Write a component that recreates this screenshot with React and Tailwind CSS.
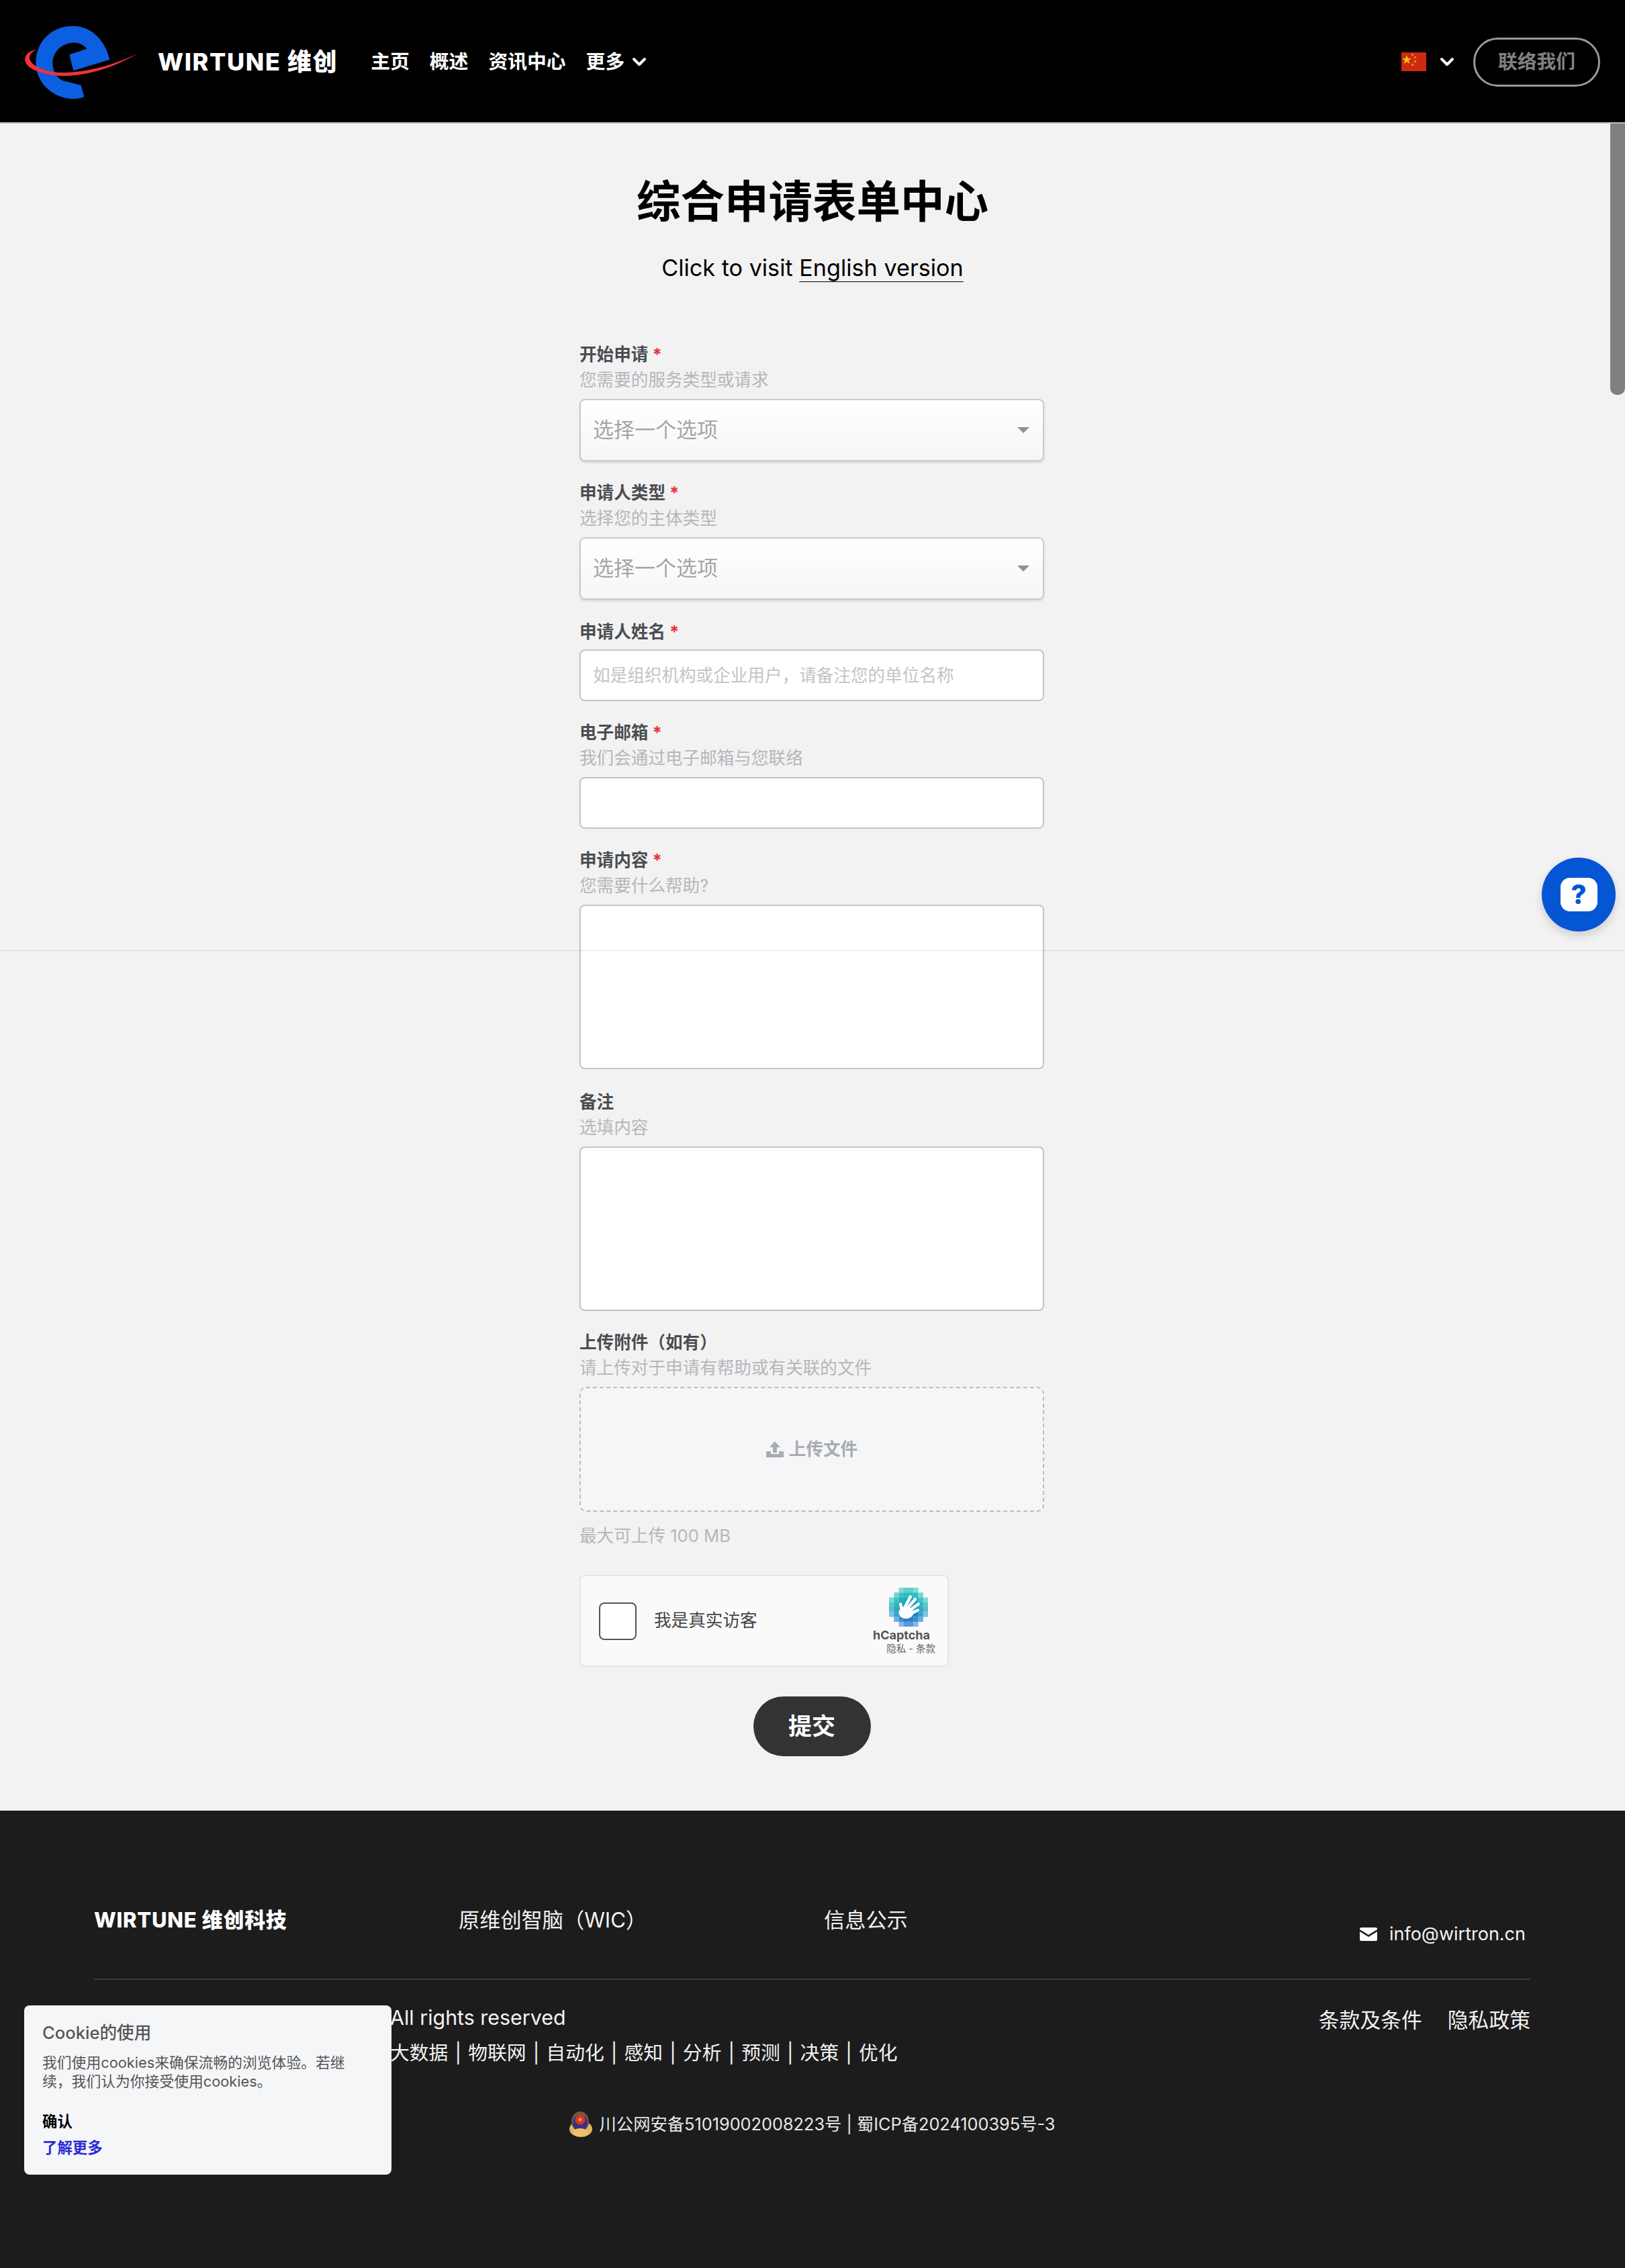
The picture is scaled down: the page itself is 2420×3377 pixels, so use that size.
import React from 'react';
import { ChevronDown } from 'lucide-react';

const CJK = "font-['Inter','Noto_Sans_CJK_SC',sans-serif]";

const Logo = () => (
  <svg viewBox="48 42 513 336" className="w-[171px] h-[112px] shrink-0">
    <path d="M265 50C350 50 410 115 430 200L268 250L250 178L328 152C310 130 285 122 262 125C210 130 175 170 175 215C175 260 205 295 235 298L302 315L316 366C295 376 270 378 250 374C165 365 100 295 100 215C100 120 170 50 265 50Z" fill="#0b5fe0" />
    <path d="M105 155C70 160 48 180 52 205C58 240 120 265 200 272C320 280 450 235 558 172C450 225 320 262 200 258C130 252 78 225 72 195C70 178 85 162 105 155Z" fill="#f0333a" />
  </svg>
);

const Flag = () => (
  <svg viewBox="0 0 37 28" className="w-[37px] h-[28px]">
    <rect width="37" height="28" fill="#cc2a12" />
    <polygon points="8,4 9.8,9 15,9 10.8,12 12.4,17 8,14 3.6,17 5.2,12 1,9 6.2,9" fill="#f6c500" />
    <rect x="15" y="2" width="3" height="3" fill="#e8821a" />
    <rect x="19" y="6" width="3" height="3" fill="#e8821a" />
    <rect x="19" y="12" width="3" height="3" fill="#e8821a" />
    <rect x="15" y="17" width="3" height="3" fill="#e8821a" />
  </svg>
);

const Label = ({ text, required, hint }) => (
  <>
    <div className="h-[38px] leading-[38px] text-[25.6px] font-bold text-[#4a4d52]">
      {text}
      {required && <span className="text-[#e5323f] ml-[6px]">*</span>}
    </div>
    {hint && <div className="h-[38px] leading-[38px] text-[25.6px] text-[#b4b7bc]">{hint}</div>}
  </>
);

const Select = () => (
  <div className="mt-[9px] h-[93px] flex items-center justify-between pl-[18px] pr-[20px] rounded-[8px] border-2 border-[#cbcbcb] bg-gradient-to-b from-white to-[#f6f6f6] shadow-[0_2px_3px_rgba(0,0,0,0.12)]">
    <span className="text-[31px] text-[#a3a5a8]">选择一个选项</span>
    <span className="w-0 h-0 border-x-[9px] border-x-transparent border-t-[9px] border-t-[#909090]"></span>
  </div>
);

const Input = ({ placeholder }) => (
  <div className={`h-[77px] flex items-center px-[18px] pt-[2px] rounded-[8px] border-2 border-[#c4c4c4] bg-white text-[25.6px] text-[#c2c4c8] ${placeholder ? '' : 'mt-[9px]'}`}>
    {placeholder}
  </div>
);

const TextArea = () => (
  <div className="mt-[9px] h-[245px] rounded-[8px] border-2 border-[#c4c4c4] bg-white"></div>
);

const Captcha = () => {
  // hCaptcha mosaic, row by row
  const rows = [
    ['', '', '#7fdad3', '#5fd0ca', '#5fd0ca', '#7fdad3', '', ''],
    ['', '#72d6d0', '#3cc4c2', '#2fbcc0', '#2fbcc0', '#2fbcc0', '#72d6d0', ''],
    ['#7fdad3', '#3cc4c2', '#22afbb', '#1da9b8', '#1da9b8', '#1da9b8', '#3cc4c2', '#7fdad3'],
    ['#5cc8cc', '#2fb6c0', '#1aa0b6', '#1496b4', '#1496b4', '#1496b4', '#2fb6c0', '#5cc8cc'],
    ['#5cbcd0', '#2da8c6', '#1590bc', '#1088b8', '#1088b8', '#1590bc', '#2da8c6', '#5cbcd0'],
    ['#7cc4de', '#3a9ed0', '#1c86c4', '#1480c0', '#1480c0', '#1c86c4', '#3a9ed0', '#7cc4de'],
    ['', '#6aaede', '#3a8ed2', '#2a80cc', '#2a80cc', '#3a8ed2', '#6aaede', ''],
    ['', '', '#86b8e2', '#5a9ad8', '#5a9ad8', '#86b8e2', '', ''],
  ];
  return (
    <div className="mt-[39px] w-[550px] h-[137px] flex items-center justify-between pl-[27px] pr-[18px] rounded-[8px] border-2 border-[#e6e6e6] bg-[#fafafa]">
      <div className="flex items-center">
        <div className="w-[56px] h-[56px] rounded-[8px] border-2 border-[#555] bg-white"></div>
        <span className="ml-[26px] text-[25.6px] text-[#444]">我是真实访客</span>
      </div>
      <div className="flex flex-col items-end">
        <svg viewBox="0 0 64 64" className="w-[58px] h-[58px] mr-[11px]">
          {rows.map((row, y) =>
            row.map((c, x) => c && <rect key={`${x}-${y}`} x={x * 8} y={y * 8} width="8.2" height="8.2" fill={c} />)
          )}
          <g stroke="#fff" strokeWidth="5" strokeLinecap="round">
            <line x1="26" y1="32" x2="35" y2="15" />
            <line x1="30" y1="34" x2="43" y2="19" />
            <line x1="33" y1="38" x2="48" y2="27" />
            <line x1="35" y1="43" x2="47" y2="37" />
            <line x1="21" y1="38" x2="19" y2="27" />
          </g>
          <ellipse cx="28" cy="41" rx="12" ry="10" fill="#fff" />
        </svg>
        <span className="mt-[2px] mr-[8px] text-[18px] leading-[22px] font-bold text-[#555]">hCaptcha</span>
        <span className="text-[14.5px] leading-[18px] text-[#666]">隐私 - 条款</span>
      </div>
    </div>
  );
};

const Form = () => (
  <form className="mt-[90px] ml-[863px] w-[692px] text-left">
    <div className="mb-[28px]"><Label text="开始申请" required hint="您需要的服务类型或请求" /><Select /></div>
    <div className="mb-[29px]"><Label text="申请人类型" required hint="选择您的主体类型" /><Select /></div>
    <div className="mb-[28px]">
      <Label text="申请人姓名" required />
      <div className="mt-[7px]"><Input placeholder="如是组织机构或企业用户，请备注您的单位名称" /></div>
    </div>
    <div className="mb-[28px]"><Label text="电子邮箱" required hint="我们会通过电子邮箱与您联络" /><Input /></div>
    <div className="mb-[30px]"><Label text="申请内容" required hint="您需要什么帮助?" /><TextArea /></div>
    <div className="mb-[28px]"><Label text="备注" hint="选填内容" /><TextArea /></div>
    <Label text="上传附件（如有）" hint="请上传对于申请有帮助或有关联的文件" />
    <div className="mt-[9px] h-[186px] flex items-center justify-center gap-[8px] rounded-[10px] border-2 border-dashed border-[#b9bcc1] bg-[#f5f6f8] text-[25.6px] font-bold text-[#a8abb0]">
      <svg viewBox="0 0 26 24" className="w-[26px] h-[24px]" fill="#a8abb0">
        <path d="M13 0L21 9H16V17H10V9H5Z" />
        <path d="M0 15H7V19H19V15H26V24H0Z" />
      </svg>
      上传文件
    </div>
    <div className="mt-[17px] h-[38px] leading-[38px] text-[25.6px] text-[#b4b7bc]">最大可上传 100 MB</div>
    <Captcha />
    <button type="button" className="block mx-auto mt-[44px] w-[175px] h-[89px] rounded-full bg-[#333] text-white text-[35px] font-bold">提交</button>
  </form>
);

const Cookie = () => (
  <div className="absolute left-[36px] top-[2986px] w-[547px] h-[252px] rounded-[8px] bg-[#f5f6f8] px-[27px] pt-[26px]">
    <div className="text-[25.6px] leading-[30px] font-medium text-[#555]">Cookie的使用</div>
    <p className="mt-[15px] text-[21.8px] leading-[28px] text-[#555]">我们使用cookies来确保流畅的浏览体验。若继续，我们认为你接受使用cookies。</p>
    <div className="mt-[32px] text-[22.4px] leading-[28px] font-semibold text-black">确认</div>
    <div className="mt-[11px] text-[22.4px] leading-[28px] font-semibold text-[#2b2bd6]">了解更多</div>
  </div>
);

const Emblem = () => (
  <svg viewBox="0 0 34 38" className="w-[34px] h-[38px] shrink-0">
    <ellipse cx="17" cy="26" rx="17" ry="12" fill="#e3b45e" />
    <ellipse cx="16" cy="15" rx="13" ry="15" fill="#6f5a46" />
    <ellipse cx="16" cy="17" rx="11" ry="12" fill="#3a2f88" />
    <circle cx="16" cy="12" r="7.5" fill="#d9351f" />
    <circle cx="16" cy="12" r="2.5" fill="#e8a030" />
    <ellipse cx="16" cy="31" rx="11" ry="6" fill="#eec06c" />
  </svg>
);

const Footer = () => (
  <footer className="h-[681px] bg-[#1c1c1c] text-white pl-[140px] pr-[141px]">
    <div className="pt-[144px] h-[252px] border-b-2 border-[#3a3a3a] flex items-start">
      <div className="w-[543px] text-[31px] leading-[38px] font-extrabold tracking-[0.7px]">WIRTUNE 维创科技</div>
      <div className="w-[544px] text-[31.2px] leading-[38px] text-[#f2f2f2]">原维创智脑（WIC）</div>
      <div className="text-[31.2px] leading-[38px] text-[#f2f2f2]">信息公示</div>
      <div className="ml-auto mt-[21px] mr-[7px] flex items-center gap-[18px] text-[27px] leading-[38px] text-[#f2f2f2]">
        <svg viewBox="0 0 26 20" className="w-[26px] h-[20px]" fill="#fff">
          <path d="M2 0H24C25 0 26 1 26 2V3L13 11L0 3V2C0 1 1 0 2 0Z" />
          <path d="M0 6L13 14L26 6V18C26 19 25 20 24 20H2C1 20 0 19 0 18Z" />
        </svg>
        info@wirtron.cn
      </div>
    </div>
    <div className="flex justify-between pt-[37px]">
      <div className="pl-[441px]">
        <div className="text-[30.4px] leading-[38px] text-[#f2f2f2]">All rights reserved</div>
        <div className="mt-[15px] text-[28.8px] leading-[38px] text-[#f2f2f2] [word-spacing:2px]">大数据 | 物联网 | 自动化 | 感知 | 分析 | 预测 | 决策 | 优化</div>
      </div>
      <div className="flex gap-[38px] pt-[4px] text-[30.8px] leading-[38px] text-[#f2f2f2]">
        <span>条款及条件</span>
        <span>隐私政策</span>
      </div>
    </div>
    <div className="mt-[68px] flex items-center justify-center gap-[11px] text-[25.3px] leading-[38px] text-[#e8e8e8]">
      <Emblem />
      <span>川公网安备51019002008223号 | 蜀ICP备2024100395号-3</span>
    </div>
  </footer>
);

export default function App() {
  return (
    <div className={`relative h-[3377px] flex flex-col overflow-hidden bg-[#f2f2f2] ${CJK}`}>
      <header className="h-[184px] pt-[2px] shrink-0 bg-black border-b-2 border-[#bdbdbd] flex items-center pl-[36px] pr-[37px] text-white">
        <Logo />
        <div className="ml-[28px] text-[36px] font-extrabold whitespace-nowrap tracking-[1.6px]">WIRTUNE 维创</div>
        <nav className="ml-[49px] flex items-center gap-[30px] text-[28.8px] font-bold">
          <span>主页</span>
          <span>概述</span>
          <span>资讯中心</span>
          <span className="flex items-center gap-[6px]">更多<ChevronDown className="w-[32px] h-[32px]" strokeWidth={3} /></span>
        </nav>
        <div className="ml-auto flex items-center">
          <Flag />
          <ChevronDown className="ml-[15px] w-[32px] h-[32px]" strokeWidth={3} />
          <button type="button" className="ml-[23px] w-[189px] h-[73px] rounded-full border-[3px] border-[#999] text-[#808080] text-[28.8px] font-bold">联络我们</button>
        </div>
      </header>
      <main className="flex-1 text-center">
        <h1 className="mt-[77px] h-[80px] text-[65.5px] leading-[80px] font-bold text-black">综合申请表单中心</h1>
        <p className="mt-[38px] h-[40px] text-[34.2px] leading-[40px] text-black">
          Click to visit <span className="underline underline-offset-[8px] decoration-1">English version</span>
        </p>
        <Form />
      </main>
      <Footer />
      <Cookie />
      {/* scrollbar thumb */}
      <div className="absolute right-0 top-[184px] w-[22px] h-[404px] rounded-bl-[10px] rounded-br-[10px] bg-[#808080]"></div>
      {/* seam line */}
      <div className="absolute left-0 right-0 top-[1415px] h-[1px] bg-black/10"></div>
      {/* help button */}
      <div className="absolute left-[2296px] top-[1277px] w-[110px] h-[110px] rounded-full bg-[#0556d4] shadow-[0_6px_14px_rgba(0,0,0,0.15)] flex items-center justify-center">
        <div className="w-[55px] h-[50px] rounded-[14px] bg-white flex items-center justify-center text-[#0556d4] text-[40px] leading-none font-extrabold">?</div>
      </div>
    </div>
  );
}
